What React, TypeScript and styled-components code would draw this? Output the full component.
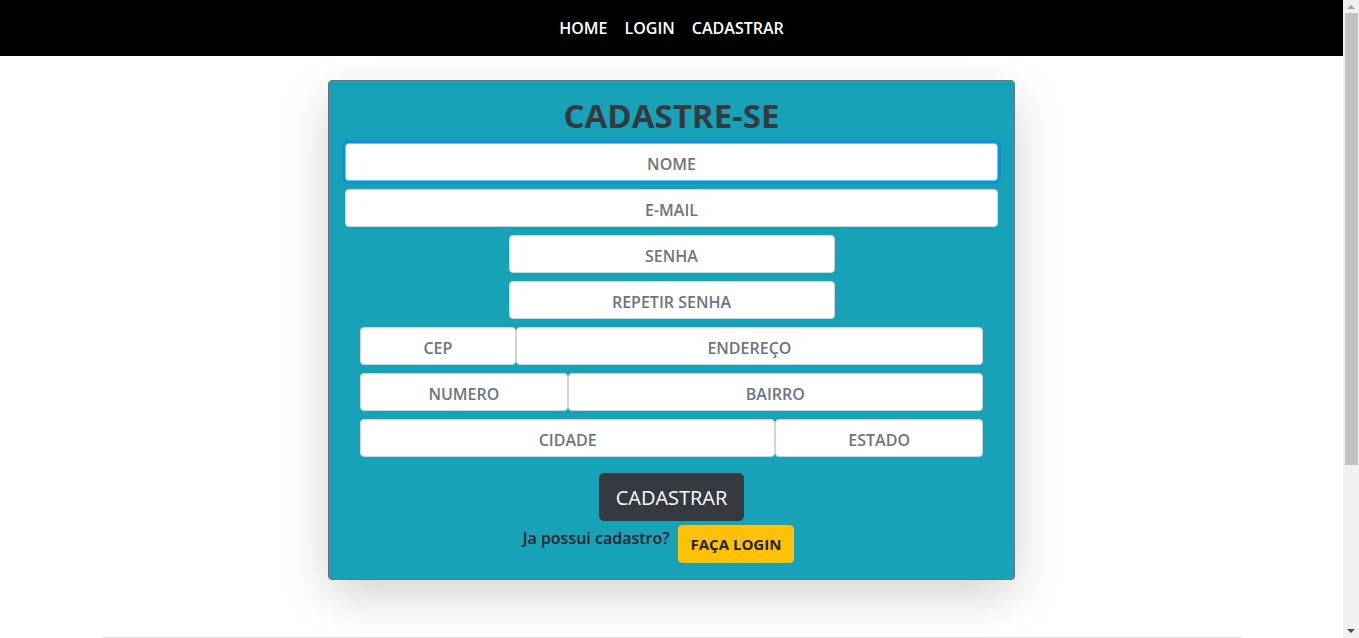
import React from "react";
import styled, { createGlobalStyle } from "styled-components";

const Global = createGlobalStyle`
  * { box-sizing: border-box; }
  html, body { margin: 0; padding: 0; }
  html { overflow: hidden; }
  body {
    margin-right: 16px;
    font-family: "Open Sans", "Noto Sans", Arial, sans-serif;
    background: #fff;
    color: #212529;
  }
`;

const Navbar = styled.nav`
  height: 56px;
  background: #000;
  display: flex;
  align-items: center;
  justify-content: center;
  gap: 17px;
`;

const NavLink = styled.a`
  color: #fff;
  font-size: 16px;
  font-weight: 600;
  text-decoration: none;
`;

const Main = styled.main`
  display: flex;
  justify-content: center;
  padding: 24px 0 57px;
`;

const Card = styled.form`
  width: 687px;
  background: #17a2b8;
  border: 1px solid #6c757d;
  border-radius: 4px;
  padding: 16px;
  box-shadow: 0 16px 48px rgba(0, 0, 0, 0.175);
  display: flex;
  flex-direction: column;
  align-items: center;
`;

const Title = styled.h1`
  margin: 0 0 8px;
  font-size: 33px;
  line-height: 38px;
  font-weight: 700;
  color: #343a40;
`;

const Stack = styled.div`
  width: 100%;
  display: flex;
  flex-direction: column;
  align-items: center;
  gap: 8px;
`;

const Row = styled.div<{ $cols: string }>`
  width: 100%;
  padding: 0 15px;
  display: grid;
  grid-template-columns: ${(p) => p.$cols};
`;

const Input = styled.input<{ $focus?: boolean; $half?: boolean }>`
  width: ${(p) => (p.$half ? "326px" : "100%")};
  height: 38px;
  padding: 3px 0 0;
  border: 1px solid ${(p) => (p.$focus ? "#80bdff" : "#ced4da")};
  border-radius: 4px;
  background: #fff;
  text-align: center;
  font-family: "Open Sans", "Noto Sans", Arial, sans-serif;
  font-size: 16px;
  font-weight: 600;
  color: #495057;
  outline: none;
  box-shadow: ${(p) => (p.$focus ? "0 0 0 3px rgba(0, 123, 255, 0.35)" : "none")};
  &::placeholder {
    color: #6c757d;
    opacity: 1;
    text-transform: uppercase;
  }
`;

const Submit = styled.button`
  margin-top: 16px;
  height: 48px;
  padding: 0 16px;
  background: #343a40;
  border: 1px solid #343a40;
  border-radius: 5px;
  color: #fff;
  font-family: "Open Sans", "Noto Sans", Arial, sans-serif;
  font-size: 20px;
  font-weight: 400;
`;

const LoginLine = styled.div`
  margin-top: 4px;
  padding-right: 26px;
  display: flex;
  align-items: flex-start;
  gap: 8px;
`;

const Question = styled.span`
  font-size: 16px;
  font-weight: 600;
  color: #212529;
  padding-top: 2px;
`;

const LoginButton = styled.button`
  height: 38px;
  padding: 0 12px;
  background: #ffc107;
  border: 1px solid #ffc107;
  border-radius: 4px;
  color: #212529;
  font-family: "Open Sans", "Noto Sans", Arial, sans-serif;
  font-size: 15px;
  font-weight: 700;
`;

const Footer = styled.footer`
  width: 1140px;
  margin: 0 auto;
  height: 223px;
  border-top: 1px solid #dee2e6;
`;

const ScrollTrack = styled.div`
  position: fixed;
  top: 0;
  right: 0;
  width: 16px;
  height: 100vh;
  background: #f1f1f1;
  display: flex;
  flex-direction: column;
  align-items: center;
`;

const ScrollArrow = styled.div<{ $down?: boolean }>`
  width: 0;
  height: 0;
  margin: 5px 0 ${(p) => (p.$down ? "5px" : "4px")};
  border-left: 4px solid transparent;
  border-right: 4px solid transparent;
  ${(p) =>
    p.$down
      ? "border-top: 4px solid #505050; margin-top: auto;"
      : "border-bottom: 4px solid #a3a3a3;"}
`;

const ScrollThumb = styled.div`
  width: 13px;
  height: 452px;
  margin-left: 2px;
  margin-right: 1px;
  align-self: stretch;
  background: #c1c1c1;
`;

export default function App() {
  return (
    <>
      <Global />
      <Navbar>
        <NavLink href="#">HOME</NavLink>
        <NavLink href="#">LOGIN</NavLink>
        <NavLink href="#">CADASTRAR</NavLink>
      </Navbar>
      <Main>
        <Card onSubmit={(e) => e.preventDefault()}>
          <Title>CADASTRE-SE</Title>
          <Stack>
            <Input $focus placeholder="Nome" />
            <Input placeholder="E-mail" />
            <Input $half type="password" placeholder="Senha" />
            <Input $half type="password" placeholder="Repetir senha" />
            <Row $cols="1fr 3fr">
              <Input placeholder="CEP" />
              <Input placeholder="Endereço" />
            </Row>
            <Row $cols="1fr 2fr">
              <Input placeholder="Numero" />
              <Input placeholder="Bairro" />
            </Row>
            <Row $cols="2fr 1fr">
              <Input placeholder="Cidade" />
              <Input placeholder="Estado" />
            </Row>
          </Stack>
          <Submit type="submit">CADASTRAR</Submit>
          <LoginLine>
            <Question>Ja possui cadastro?</Question>
            <LoginButton type="button">FAÇA LOGIN</LoginButton>
          </LoginLine>
        </Card>
      </Main>
      <Footer />
      <ScrollTrack aria-hidden>
        <ScrollArrow />
        <ScrollThumb />
        <ScrollArrow $down />
      </ScrollTrack>
    </>
  );
}
